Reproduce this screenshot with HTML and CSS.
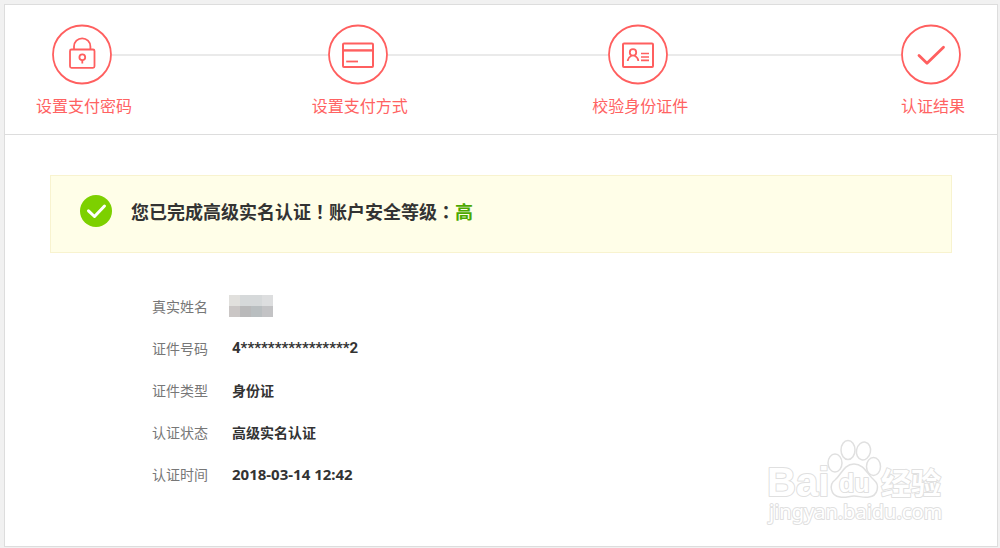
FILE: index.html
```html
<!DOCTYPE html>
<html lang="zh-CN">
<head>
<meta charset="utf-8">
<meta name="viewport" content="width=device-width, initial-scale=1">
<title>实名认证</title>
<link rel="stylesheet" href="styles.css">
</head>
<body>
<main class="card">
  <ol class="steps">
    <li class="step">
      <span class="step-icon">
        <svg viewBox="0 0 60 60" aria-hidden="true">
          <circle cx="30" cy="29.500" r="29" stroke-width="1.8"/>
          <path d="M22 24.500v-3a8.200 8.200 0 0 1 16.400 0v3" stroke-width="1.8"/>
          <rect x="18" y="24.500" width="24.500" height="18.300" rx="1.500" stroke-width="1.8"/>
          <circle cx="30.300" cy="32.300" r="2.900" stroke-width="1.8"/>
          <path d="M30.300 35v3.500" stroke-width="1.8"/>
        </svg>
      </span>
      <span class="step-label">设置支付密码</span>
    </li>
    <li class="step">
      <span class="step-icon">
        <svg viewBox="0 0 60 60" aria-hidden="true">
          <circle cx="30" cy="29.500" r="29" stroke-width="1.8"/>
          <rect x="15" y="18.500" width="30" height="23.500" rx="1" stroke-width="2"/>
          <path d="M15 25.400h30" stroke-width="2.400"/>
          <path d="M18.200 36.500h11.800" stroke-width="1.800"/>
        </svg>
      </span>
      <span class="step-label">设置支付方式</span>
    </li>
    <li class="step">
      <span class="step-icon">
        <svg viewBox="0 0 60 60" aria-hidden="true">
          <circle cx="30" cy="29.500" r="29" stroke-width="1.8"/>
          <rect x="15" y="18.500" width="30" height="23.500" rx="1" stroke-width="2"/>
          <circle cx="25" cy="27.400" r="3.200" stroke-width="1.800"/>
          <path d="M19.800 36v-.8q.6-3 3.700-4.500M26.500 30.700q3.200 1.500 3.700 4.500v.8" stroke-width="1.800"/>
          <path d="M33 28.500h8M33 32h8M33 35.300h8" stroke-width="1.700"/>
        </svg>
      </span>
      <span class="step-label">校验身份证件</span>
    </li>
    <li class="step">
      <span class="step-icon">
        <svg viewBox="0 0 60 60" aria-hidden="true">
          <circle cx="30" cy="29.500" r="29" stroke-width="1.8"/>
          <path d="M18 30.500l8 7.800 16.500-16" stroke-width="2.800" stroke-linecap="round" stroke-linejoin="round"/>
        </svg>
      </span>
      <span class="step-label">认证结果</span>
    </li>
  </ol>

  <section class="content">
    <div class="notice">
      <svg class="notice-icon" viewBox="0 0 32 32" aria-hidden="true">
        <circle cx="16" cy="16" r="16" fill="#7dd000"/>
        <path d="M8.500 15.800l6 5.700 10-10.500" fill="none" stroke="#fff" stroke-width="3" stroke-linecap="round" stroke-linejoin="round"/>
      </svg>
      <h1 class="notice-text">您已完成高级实名认证<span class="mark" lang="zh-TW">！</span>账户安全等级<span class="mark" lang="zh-TW">：</span><em class="level">高</em></h1>
    </div>

    <dl class="details">
      <dt>真实姓名</dt>
      <dd><span class="mosaic" role="img" aria-label="已隐藏"><i class="m1"></i><i class="m2"></i><i class="m2"></i><i class="m3"></i><i class="m4"></i><i class="m5"></i><i class="m6"></i><i class="m7"></i></span></dd>
      <dt>证件号码</dt>
      <dd class="id-number">4****************2</dd>
      <dt>证件类型</dt>
      <dd>身份证</dd>
      <dt>认证状态</dt>
      <dd>高级实名认证</dd>
      <dt>认证时间</dt>
      <dd class="date">2018-03-14 12:42</dd>
    </dl>
  </section>

  <svg class="watermark" viewBox="0 0 184 92" aria-label="Baidu经验 jingyan.baidu.com">
    <g class="wm-shape">
      <ellipse cx="69" cy="25" rx="7" ry="9"/>
      <ellipse cx="82" cy="12" rx="7" ry="9.500"/>
      <ellipse cx="97.500" cy="13" rx="7" ry="9" transform="rotate(12 97.500 13)"/>
      <ellipse cx="107.500" cy="28.500" rx="7" ry="9"/>
    </g>
    <text class="wm-latin" x="1" y="58">Bai</text>
    <path class="wm-shape" d="M88 26c-10 0-13 11-19 16-6 4-5 16 5 17 6 1 9-1 14-1s9 2 15 1c9-1 11-12 5-17-7-6-10-16-20-16z"/>
    <text class="wm-du" x="73" y="54">du</text>
    <text class="wm-cjk" x="115" y="56">经验</text>
    <text class="wm-url" x="3" y="81">jingyan.baidu.com</text>
  </svg>
</main>
</body>
</html>
```
FILE: styles.css
```css
* {
  box-sizing: border-box;
}

body {
  margin: 0;
  padding: 4px 2px 1px 4px;
  background: #f1f1f1;
  color: #333;
  font-family: "Noto Sans CJK SC", sans-serif;
  font-size: 14px;
}

.card {
  position: relative;
  background: #fff;
  border: 1px solid #ddd;
}

.steps {
  position: relative;
  display: grid;
  grid-template-columns: auto 180fr auto 185fr auto 213fr auto;
  margin: 0;
  padding: 20px 32px 17px 31px;
  list-style: none;
  border-bottom: 1px solid #ddd;
}

.steps::before {
  content: "";
  position: absolute;
  top: 49px;
  left: 77px;
  right: 66px;
  height: 2px;
  background: #eaeaea;
}

.step {
  position: relative;
  display: flex;
  flex-direction: column;
  align-items: center;
  gap: 8px;
}

.step:nth-child(1) { grid-column: 1; }
.step:nth-child(2) { grid-column: 3; }
.step:nth-child(3) { grid-column: 5; }
.step:nth-child(4) { grid-column: 7; }

.step-icon {
  width: 60px;
  height: 60px;
  margin-right: 4px;
  border-radius: 50%;
  background: #fff;
}

.step-icon svg {
  display: block;
  overflow: visible;
  fill: none;
  stroke: #ff5f5f;
}

.step-label {
  color: #ff6262;
  font-size: 16px;
  font-weight: 400;
  line-height: 24px;
}

.content {
  padding: 40px 45px 51px;
}

.notice {
  display: flex;
  align-items: center;
  gap: 19px;
  padding: 19px 29px 25px;
  background: #fffee8;
  border: 1px solid #f8f3cf;
}

.notice-icon {
  width: 32px;
  height: 32px;
}

.notice-text {
  margin: 0;
  font-size: 18px;
  font-weight: 700;
  line-height: 32px;
}

.mark {
  font-family: "Noto Sans CJK TC", sans-serif;
}

.level {
  color: #4ca800;
  font-style: normal;
}

.details {
  display: grid;
  grid-template-columns: auto 1fr;
  column-gap: 24px;
  margin: 32px 0 0;
  padding-left: 102px;
  line-height: 42px;
}

.details dt {
  color: #777;
  font-weight: 400;
}

.details dd {
  display: flex;
  align-items: center;
  margin: 0;
  font-weight: 700;
}

.details .id-number {
  font-family: Roboto, sans-serif;
  font-size: 15px;
}

.details .date {
  font-family: "Noto Sans", sans-serif;
  font-size: 15px;
}

.mosaic {
  display: grid;
  grid-template-columns: repeat(4, 11px);
  grid-auto-rows: 11px;
  margin-left: -3px;
}

.m1 { background: #e1e0dd; }
.m2 { background: #d6d9da; }
.m3 { background: #dddedf; }
.m4 { background: #cac6c5; }
.m5 { background: #b9b9ba; }
.m6 { background: #b9bec0; }
.m7 { background: #c3c3c5; }

.watermark {
  position: absolute;
  right: 47px;
  bottom: 16px;
  width: 184px;
  height: 92px;
}

.wm-shape,
.watermark text {
  fill: #fff;
  stroke: #e0e0e0;
  stroke-width: 1.5px;
}

.watermark text {
  font-family: "Liberation Sans", sans-serif;
  paint-order: stroke;
  stroke-width: 2px;
  stroke-linejoin: round;
}

.watermark .wm-latin {
  font-size: 40px;
  font-weight: 700;
}

.watermark .wm-du {
  font-size: 25px;
  font-weight: 700;
}

.watermark .wm-cjk {
  font-family: "Noto Sans CJK SC", sans-serif;
  font-size: 30px;
  font-weight: 700;
}

.watermark .wm-url {
  font-family: "Noto Sans", sans-serif;
  font-size: 20px;
}
```
